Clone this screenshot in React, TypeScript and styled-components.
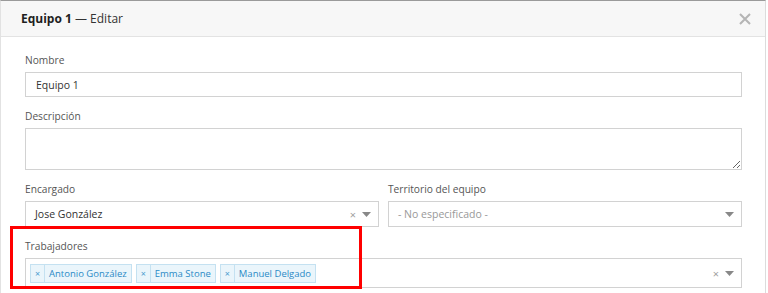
import React from "react";
import styled, { createGlobalStyle } from "styled-components";

const GlobalStyle = createGlobalStyle`
    html, body {
        margin: 0;
        padding: 0;
        background: #ffffff;
        font-family: "Open Sans", "Noto Sans", sans-serif;
    }
`;

const Modal = styled.div`
    width: 766px;
    height: 293px;
    box-sizing: border-box;
    border-top: 1px solid #9a9a9a;
    border-left: 1px solid #e2e2e2;
    border-right: 1px solid #dcdcdc;
    overflow: hidden;
    background: #ffffff;
`;

const Header = styled.div`
    height: 35px;
    display: flex;
    align-items: center;
    justify-content: space-between;
    padding: 0 13px 0 20px;
    background: #f7f7f7;
    border-bottom: 1px solid #e3e3e3;
    font-size: 12px;
    color: #333;
`;

const Title = styled.div`
    b {
        font-weight: 700;
        color: #1e1e1e;
    }
`;

const CloseButton = styled.button`
    width: 14px;
    height: 14px;
    padding: 0;
    border: none;
    background: none;
    display: flex;
    align-items: center;
    justify-content: center;
    cursor: pointer;
`;

const Body = styled.div`
    padding: 15px 23px 0 24px;
    display: flex;
    flex-direction: column;
    gap: 11px;
`;

const Row = styled.div`
    display: grid;
    grid-template-columns: 1fr 1fr;
    gap: 9px;
`;

const Group = styled.div`
    position: relative;
    display: flex;
    flex-direction: column;
`;

const Label = styled.label`
    font-size: 10.2px;
    line-height: 16px;
    color: #555;
    margin-bottom: 4px;
`;

const TextInput = styled.input`
    height: 25px;
    box-sizing: border-box;
    border: 1px solid #d2d2d2;
    padding: 0 10px;
    font-family: inherit;
    font-size: 10.5px;
    color: #333;
    outline: none;
`;

const TextArea = styled.textarea`
    height: 42px;
    box-sizing: border-box;
    border: 1px solid #d2d2d2;
    padding: 4px 10px;
    font-family: inherit;
    font-size: 10.5px;
    resize: vertical;
    outline: none;
    margin: 0;
`;

const SelectBox = styled.div<{ $height: number }>`
    height: ${({ $height }) => $height}px;
    box-sizing: border-box;
    border: 1px solid #d2d2d2;
    display: flex;
    align-items: center;
    padding: 0 7px 0 9px;
    font-size: 10.5px;
    color: #333;
    background: #fff;
`;

const SelectValue = styled.span<{ $placeholder?: boolean }>`
    flex: 1;
    color: ${({ $placeholder }) => ($placeholder ? "#999" : "#333")};
`;

const TagList = styled.div`
    flex: 1;
    display: flex;
    gap: 4px;
    margin-left: -5px;
`;

const Tag = styled.span`
    height: 19px;
    box-sizing: border-box;
    display: inline-flex;
    align-items: stretch;
    background: #eaf5fb;
    border: 1px solid #c4e1f1;
    color: #2b8ac6;
    font-size: 9.5px;
`;

const TagRemove = styled.span`
    width: 13px;
    display: flex;
    align-items: center;
    justify-content: center;
    border-right: 1px solid #c4e1f1;
    font-size: 9px;
    color: #4a9ccf;
`;

const TagText = styled.span`
    display: flex;
    align-items: center;
    padding: 0 4px;
`;

const ClearIcon = styled.span`
    font-size: 11px;
    color: #a0a0a0;
    margin-right: 6px;
`;

const Highlight = styled.div`
    position: absolute;
    left: -15px;
    top: -12px;
    width: 352px;
    height: 63px;
    box-sizing: border-box;
    border: 3px solid #ff0000;
    pointer-events: none;
`;

function Caret() {
    return (
        <svg width="9" height="5" viewBox="0 0 9 5">
            <path d="M0 0h9L4.5 5z" fill="#888" />
        </svg>
    );
}

export default function App() {
    const workers = ["Antonio González", "Emma Stone", "Manuel Delgado"];
    return (
        <>
            <GlobalStyle />
            <Modal>
                <Header>
                    <Title>
                        <b>Equipo 1</b> — Editar
                    </Title>
                    <CloseButton aria-label="Cerrar">
                        <svg width="12" height="12" viewBox="0 0 12 12">
                            <path d="M1 1l10 10M11 1L1 11" stroke="#b5b5b5" strokeWidth="2" />
                        </svg>
                    </CloseButton>
                </Header>
                <Body>
                    <Group>
                        <Label>Nombre</Label>
                        <TextInput defaultValue="Equipo 1" />
                    </Group>
                    <Group>
                        <Label>Descripción</Label>
                        <TextArea />
                    </Group>
                    <Row>
                        <Group>
                            <Label>Encargado</Label>
                            <SelectBox $height={26}>
                                <SelectValue>Jose González</SelectValue>
                                <ClearIcon>×</ClearIcon>
                                <Caret />
                            </SelectBox>
                        </Group>
                        <Group>
                            <Label>Territorio del equipo</Label>
                            <SelectBox $height={26}>
                                <SelectValue $placeholder>- No especificado -</SelectValue>
                                <Caret />
                            </SelectBox>
                        </Group>
                    </Row>
                    <Group>
                        <Highlight />
                        <Label>Trabajadores</Label>
                        <SelectBox $height={30}>
                            <TagList>
                                {workers.map((w) => (
                                    <Tag key={w}>
                                        <TagRemove>×</TagRemove>
                                        <TagText>{w}</TagText>
                                    </Tag>
                                ))}
                            </TagList>
                            <ClearIcon>×</ClearIcon>
                            <Caret />
                        </SelectBox>
                    </Group>
                </Body>
            </Modal>
        </>
    );
}
